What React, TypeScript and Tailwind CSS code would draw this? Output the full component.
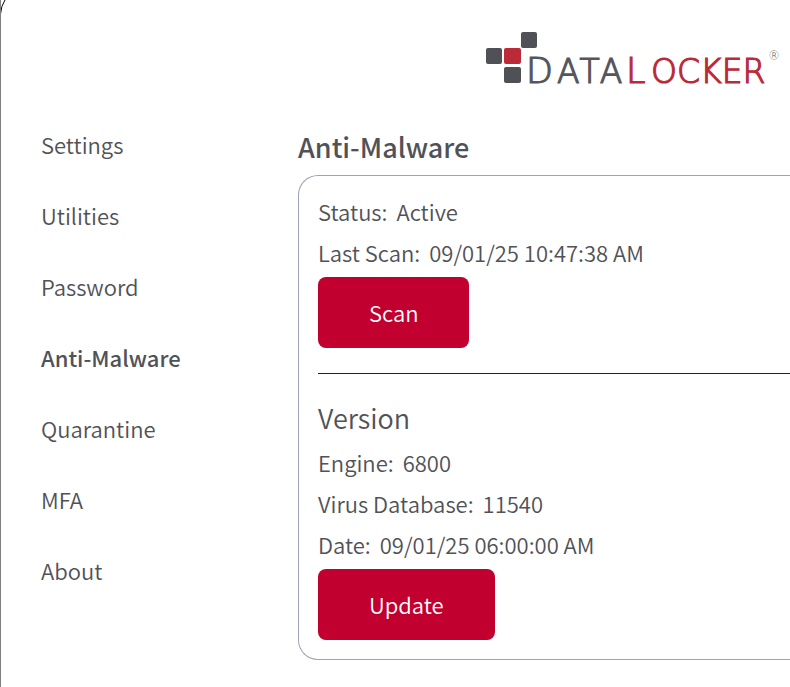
import React, { useState } from "react";
import clsx from "clsx";

interface InfoRowProps {
  label: string;
  value: string;
}

interface ActionButtonProps {
  children: React.ReactNode;
}

const menuItems = [
  "Settings",
  "Utilities",
  "Password",
  "Anti-Malware",
  "Quarantine",
  "MFA",
  "About",
];

const Logo: React.FC = () => {
  return (
    <svg
      viewBox="0 0 300 64"
      className="h-16 w-[300px] shrink-0"
      role="img"
      aria-label="DataLocker"
    >
      <rect x="35" y="0" width="16" height="16" rx="2" fill="#4f5157" />
      <rect x="0" y="16" width="16" height="16" rx="2" fill="#4f5157" />
      <rect x="18" y="16" width="17" height="16" rx="2" fill="#bb2a37" />
      <rect x="18" y="35" width="17" height="16" rx="2" fill="#4f5157" />
      <g
        fontFamily="'DejaVu Sans', sans-serif"
        strokeWidth="1.2"
        style={{ fontKerning: "none" }}
      >
        <g fill="#54565b" stroke="#54565b">
          <text x="40" y="51" fontSize="35">
            D
          </text>
          <text x="71" y="51" fontSize="33">
            ATA
          </text>
        </g>
        <g fill="#bb2a37" stroke="#bb2a37">
          <text x="140" y="51" fontSize="35">
            L
          </text>
          <text x="165" y="51" fontSize="33">
            OCKER
          </text>
        </g>
        <text x="282" y="28" fontSize="12" fill="#54565b">
          ®
        </text>
      </g>
    </svg>
  );
};

const InfoRow: React.FC<InfoRowProps> = ({ label, value }) => {
  return (
    <p className="flex gap-[9px] leading-[41px]">
      <span>{label}</span>
      <span>{value}</span>
    </p>
  );
};

const ActionButton: React.FC<ActionButtonProps> = ({ children }) => {
  return (
    <button
      type="button"
      className="mt-1 block h-[71px] rounded-lg bg-[#c1002f] px-[51px] text-white"
    >
      {children}
    </button>
  );
};

const App: React.FC = () => {
  const [activeItem, setActiveItem] = useState<string>("Anti-Malware");

  return (
    <div className="relative min-h-screen overflow-hidden border-l border-[#808080] bg-white font-['Noto_Sans_CJK_SC',sans-serif] text-[22px] font-[350] text-[#505257]">
      {/* Window corner */}
      <svg
        viewBox="0 0 8 14"
        className="absolute top-0 left-[-1px] h-[14px] w-2"
        aria-hidden="true"
      >
        <path d="M0 0H5Q1 6 0.5 14H0Z" fill="#fff" />
        <path d="M5 0Q1 6 0.5 14" fill="none" stroke="#000" />
      </svg>

      <header className="flex h-[109px] items-start justify-end pt-8 pr-1">
        <Logo />
      </header>

      <div className="flex">
        <nav className="w-[297px] shrink-0 pl-10">
          <ul>
            {menuItems.map((item) => (
              <li key={item} className="leading-[71px]">
                <a
                  href="#"
                  onClick={() => setActiveItem(item)}
                  className={clsx(item === activeItem && "font-medium")}
                >
                  {item}
                </a>
              </li>
            ))}
          </ul>
        </nav>

        <main className="min-w-0 grow pt-[11px]">
          <h1 className="mb-px text-[27px] leading-[54px] font-medium">
            Anti-Malware
          </h1>

          <div className="rounded-l-[20px] border border-r-0 border-[#9ea3b5] pt-[15px] pb-[19px] pl-[19px]">
            <section>
              <InfoRow label="Status:" value="Active" />
              <InfoRow label="Last Scan:" value="09/01/25 10:47:38 AM" />
              <ActionButton>Scan</ActionButton>
            </section>

            <hr className="my-[25px] border-[#222]" />

            <section>
              <h2 className="mb-[5px] text-[27px] leading-[38px]">Version</h2>
              <InfoRow label="Engine:" value="6800" />
              <InfoRow label="Virus Database:" value="11540" />
              <InfoRow label="Date:" value="09/01/25 06:00:00 AM" />
              <ActionButton>Update</ActionButton>
            </section>
          </div>
        </main>
      </div>
    </div>
  );
};

export default App;
